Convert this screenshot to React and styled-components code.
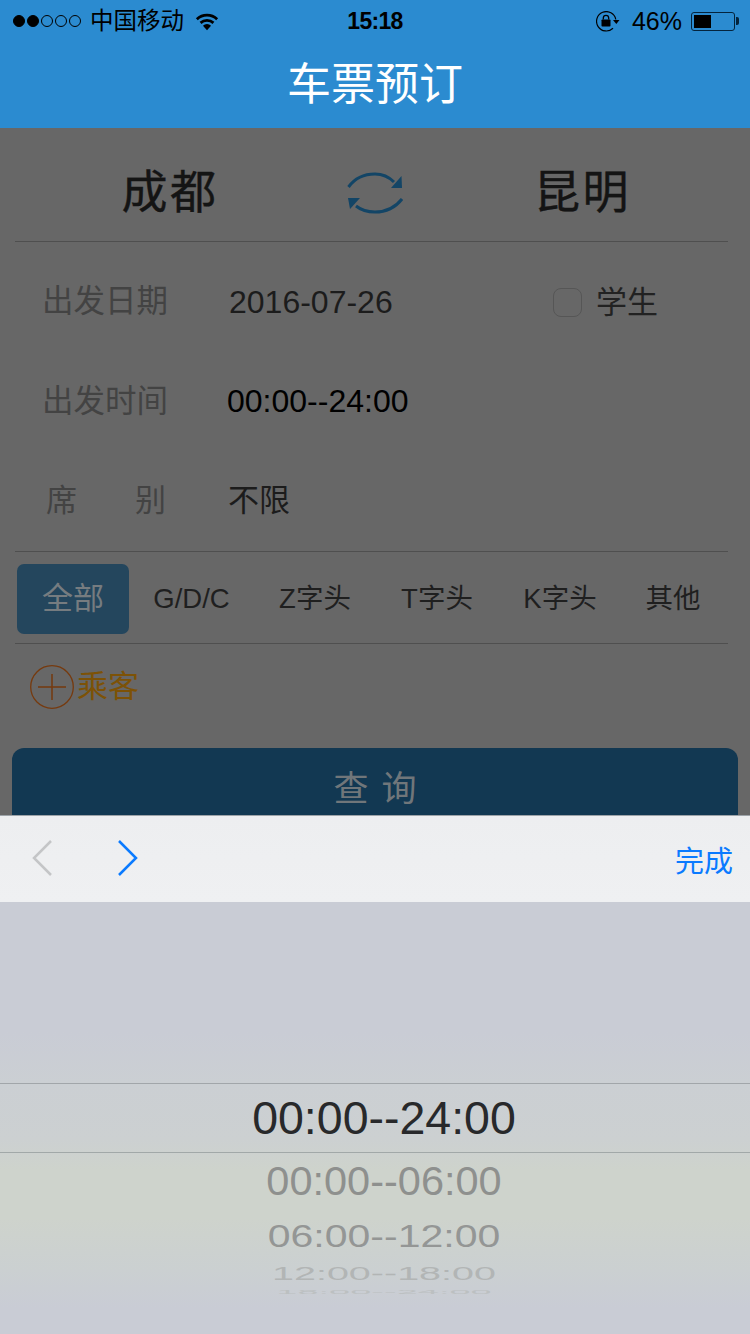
import styled, { createGlobalStyle } from "styled-components";

const GlobalStyle = createGlobalStyle`
  html, body {
    margin: 0;
    padding: 0;
    background: #676767;
  }
  * {
    box-sizing: border-box;
  }
`;

const cjk = `"Liberation Sans", "Noto Sans CJK SC", sans-serif`;

const Page = styled.div`
  width: 750px;
  height: 1334px;
  display: flex;
  flex-direction: column;
  overflow: hidden;
  font-family: ${cjk};
`;
const TopBlue = styled.div`
  height: 128px;
  flex: none;
  background: #2b8bd0;
`;
const StatusBar = styled.div`
  height: 40px;
  padding: 1px 11px 0 13px;
  display: grid;
  grid-template-columns: 1fr auto 1fr;
  align-items: center;
  color: #000;
`;
const StatusLeft = styled.div`
  display: flex;
  align-items: center;
`;
const StatusRight = styled.div`
  display: flex;
  align-items: center;
  justify-content: flex-end;
`;
const Signal = styled.div`
  display: flex;
  gap: 2px;
  margin-right: 9px;
`;
const Dot = styled.span`
  width: 12px;
  height: 12px;
  border-radius: 50%;
  border: 1px solid #000;
  background: ${props => (props.$on ? "#000" : "transparent")};
`;
const Carrier = styled.span`
  font-size: 23.5px;
  margin-right: 11px;
  line-height: 40px;
`;
const Clock = styled.span`
  font-size: 23px;
  font-weight: 700;
  letter-spacing: -0.7px;
  margin-left: -2px;
`;
const Percent = styled.span`
  font-size: 25px;
  margin: 0 9px 0 12px;
`;
const BatteryBody = styled.div`
  width: 44px;
  height: 19px;
  border: 1px solid #04243d;
  border-radius: 3px;
  padding: 2px;
`;
const BatteryFill = styled.div`
  height: 100%;
  background: #000;
`;
const BatteryTip = styled.div`
  width: 3px;
  height: 8px;
  background: #04243d;
  border-radius: 0 2px 2px 0;
  margin-left: 1px;
`;
const NavTitle = styled.div`
  height: 87px;
  display: flex;
  justify-content: center;
  align-items: center;
  padding-bottom: 6px;
  color: #fff;
  font-size: 44px;
`;

const Content = styled.div`
  flex: 1;
  min-height: 0;
  overflow: hidden;
  background: #676767;
`;
const CityRow = styled.div`
  height: 114px;
  margin: 0 22px 0 15px;
  border-bottom: 1px solid #4f4f4f;
  display: grid;
  grid-template-columns: 310px 100px 1fr;
  align-items: center;
`;
const City = styled.div`
  font-size: 46px;
  letter-spacing: 2.5px;
  color: #141414;
  -webkit-text-stroke: 0.4px #141414;
  text-align: center;
  padding-top: 6px;
  padding-left: ${props => props.$left ?? "0"};
`;
const SwapHolder = styled.div`
  display: flex;
  justify-content: center;
  padding-top: 16px;
`;
const FormBlock = styled.div`
  padding-top: 9px;
`;
const FormRow = styled.div`
  height: 100px;
  display: flex;
  align-items: center;
  padding-left: 43px;
  line-height: 40px;
`;
const Label = styled.div`
  width: 186px;
  font-size: ${props => (props.$spread ? "31px" : "31.5px")};
  color: #434343;
  display: flex;
  justify-content: ${props => (props.$spread ? "space-between" : "flex-start")};
  padding-right: ${props => (props.$spread ? "63px" : "0")};
  padding-left: ${props => (props.$spread ? "3px" : "0")};
  margin-left: ${props => (props.$spread ? "0" : "-1px")};
  margin-right: ${props => (props.$spread ? "0" : "1px")};
`;
const Value = styled.div`
  font-size: ${props => props.$size ?? "32px"};
  color: ${props => props.$color ?? "#1c1c1c"};
  margin-left: ${props => props.$shift ?? "0"};
  padding-top: ${props => props.$drop ?? "0"};
`;
const Student = styled.div`
  margin-left: auto;
  margin-right: 92px;
  display: flex;
  align-items: center;
  gap: 14px;
  font-size: 31px;
  color: #222;
  padding-top: 3px;
`;
const CheckBox = styled.div`
  width: 29px;
  height: 29px;
  border: 1px solid #565656;
  border-radius: 8px;
`;
const TabBar = styled.div`
  height: 93px;
  margin: 0 22px 0 15px;
  border-top: 1px solid #4f4f4f;
  border-bottom: 1px solid #4f4f4f;
  display: flex;
  align-items: center;
  padding: 3px 0 0 2px;
`;
const Tab = styled.div`
  width: ${props => props.$width};
  flex: none;
  height: 70px;
  display: flex;
  align-items: center;
  justify-content: center;
  border-radius: 7px;
  font-size: ${props => (props.$active ? "31px" : "27.5px")};
  line-height: 40px;
  color: ${props => (props.$active ? "#767c80" : "#1f1f1f")};
  background: ${props => (props.$active ? "#24465d" : "transparent")};
`;
const PassengerRow = styled.div`
  height: 86px;
  padding: 0 0 0 30px;
  display: flex;
  align-items: center;
  gap: 3px;
  color: #7d5206;
  font-size: 31px;
  line-height: 40px;
`;
const QueryButton = styled.div`
  margin: 18px 12px 0;
  height: 78px;
  background: #123852;
  border-radius: 12px;
  display: flex;
  justify-content: center;
  align-items: center;
  padding-bottom: 3px;
  color: #70767a;
  font-size: 35px;
  letter-spacing: 13px;
  text-indent: 13px;
`;

const Toolbar = styled.div`
  height: 87px;
  flex: none;
  border-top: 1px solid #9da3a8;
  background: linear-gradient(180deg, #edeef0 0%, #eff0f2 100%);
  display: flex;
  align-items: center;
  padding: 0 17px 2px 31px;
  gap: 63px;
`;
const DoneText = styled.div`
  margin-left: auto;
  padding-top: 2px;
  font-size: 29px;
  color: #0a7aff;
`;
const Picker = styled.div`
  height: 432px;
  flex: none;
  display: flex;
  flex-direction: column;
  align-items: center;
  padding-top: 181px;
  background: linear-gradient(180deg, #c9ccd5 0%, #c9ccd5 30%, #cbcfd3 42%, #ccd0d1 55%, #ced3cc 62%, #ced3cc 73%, #cbd0d1 85%, #c9ccd5 94%, #c9ccd5 100%);
`;
const SelectedBand = styled.div`
  width: 100%;
  height: 70px;
  flex: none;
  border-top: 1px solid #a1a6aa;
  border-bottom: 1px solid #a1a8a8;
  display: flex;
  align-items: center;
  justify-content: center;
  padding-left: 18px;
  font-size: 46.5px;
  color: #28292b;
`;
const Wheel = styled.div`
  width: 100%;
  display: flex;
  flex-direction: column;
  align-items: center;
  padding-left: 18px;
`;
const WheelItem = styled.div`
  height: ${props => props.$height};
  line-height: ${props => props.$height};
  font-size: ${props => props.$size};
  color: ${props => props.$color};
  transform: scaleY(${props => props.$squash});
  white-space: nowrap;
`;

const WifiIcon = () => (
  <svg width="24" height="19" viewBox="0 0 26 20">
    <path d="M2 7.500a16 16 0 0 1 22 0" fill="none" stroke="#000" strokeWidth="3" />
    <path d="M6 11.500a10.500 10.500 0 0 1 14 0" fill="none" stroke="#000" strokeWidth="3" />
    <path d="M8.600 14.600a6 6 0 0 1 8.800 0L13 19.400z" fill="#000" />
  </svg>
);

const RotationLockIcon = () => (
  <svg width="24" height="21" viewBox="0 0 24 21">
    <path d="M19.800 8.500A9.700 9.700 0 1 0 17 17.300" fill="none" stroke="#000" strokeWidth="1.200" />
    <path d="M17 9h6.500l-3.200 4z" fill="#000" />
    <rect x="5.500" y="8.500" width="9" height="7" rx="0.800" fill="#000" />
    <path d="M7.300 8.500V7a2.700 2.700 0 0 1 5.400 0v1.500" fill="none" stroke="#000" strokeWidth="1.300" />
  </svg>
);

const SwapIcon = () => (
  <svg width="56" height="42" viewBox="0 0 56 42">
    <path d="M1.500 15C8 6 18 2 28 2c8 0 14 3 19 8" fill="none" stroke="#134566" strokeWidth="3" />
    <path d="M54.500 4 55 16H44z" fill="#134566" />
    <path d="M55 27c-7 9-17 13-27 13-8 0-14-2-19-6" fill="none" stroke="#134566" strokeWidth="3" />
    <path d="M1 26h12L3 37z" fill="#134566" />
  </svg>
);

const PlusCircle = () => (
  <svg width="44" height="44" viewBox="0 0 44 44">
    <circle cx="22" cy="22" r="21.300" fill="none" stroke="#763a0e" strokeWidth="1.300" />
    <path d="M8 22h28M22 9v26" stroke="#763a0e" strokeWidth="1.500" fill="none" />
  </svg>
);

const Chevron = ({ color, flip }) => (
  <svg width="22" height="38" viewBox="0 0 22 38">
    <path d={flip ? "M3 2 20 19 3 36" : "M20 2 3 19 20 36"} fill="none" stroke={color} strokeWidth="2.500" />
  </svg>
);

const tabs = [
  { text: "全部", width: "112px", active: true },
  { text: "G/D/C", width: "125px" },
  { text: "Z字头", width: "122px" },
  { text: "T字头", width: "122px" },
  { text: "K字头", width: "124px" },
  { text: "其他", width: "102px" },
];

const wheelItems = [
  { text: "00:00--06:00", height: "58px", size: "41.5px", color: "#8e908e", squash: 0.96 },
  { text: "06:00--12:00", height: "51px", size: "41px", color: "#949695", squash: 0.78 },
  { text: "12:00--18:00", height: "22px", size: "39.5px", color: "#b2b5b5", squash: 0.47 },
  { text: "18:00--24:00", height: "16px", size: "38px", color: "#bcc0c1", squash: 0.16 },
];

const App = () => {
  return (
    <Page>
      <GlobalStyle />
      <TopBlue>
        <StatusBar>
          <StatusLeft>
            <Signal>
              <Dot $on />
              <Dot $on />
              <Dot />
              <Dot />
              <Dot />
            </Signal>
            <Carrier>中国移动</Carrier>
            <WifiIcon />
          </StatusLeft>
          <Clock>15:18</Clock>
          <StatusRight>
            <RotationLockIcon />
            <Percent>46%</Percent>
            <BatteryBody>
              <BatteryFill style={{ width: "46%" }} />
            </BatteryBody>
            <BatteryTip />
          </StatusRight>
        </StatusBar>
        <NavTitle>车票预订</NavTitle>
      </TopBlue>
      <Content>
        <CityRow>
          <City>成都</City>
          <SwapHolder>
            <SwapIcon />
          </SwapHolder>
          <City $left="12px">昆明</City>
        </CityRow>
        <FormBlock>
          <FormRow>
            <Label>出发日期</Label>
            <Value $drop="2px">2016-07-26</Value>
            <Student>
              <CheckBox />
              学生
            </Student>
          </FormRow>
          <FormRow>
            <Label>出发时间</Label>
            <Value $color="#000" $shift="-2px">00:00--24:00</Value>
          </FormRow>
          <FormRow>
            <Label $spread>
              <span>席</span>
              <span>别</span>
            </Label>
            <Value $size="31px" $shift="-1px">不限</Value>
          </FormRow>
        </FormBlock>
        <TabBar>
          {tabs.map((item) => {
            return (
              <Tab key={item.text} $width={item.width} $active={item.active}>
                {item.text}
              </Tab>
            );
          })}
        </TabBar>
        <PassengerRow>
          <PlusCircle />
          乘客
        </PassengerRow>
        <QueryButton>查询</QueryButton>
      </Content>
      <Toolbar>
        <Chevron color="#c4c5c7" />
        <Chevron color="#0a7aff" flip />
        <DoneText>完成</DoneText>
      </Toolbar>
      <Picker>
        <SelectedBand>00:00--24:00</SelectedBand>
        <Wheel>
          {wheelItems.map((item) => {
            return (
              <WheelItem
                key={item.text}
                $height={item.height}
                $size={item.size}
                $color={item.color}
                $squash={item.squash}
              >
                {item.text}
              </WheelItem>
            );
          })}
        </Wheel>
      </Picker>
    </Page>
  );
};

export default App;
